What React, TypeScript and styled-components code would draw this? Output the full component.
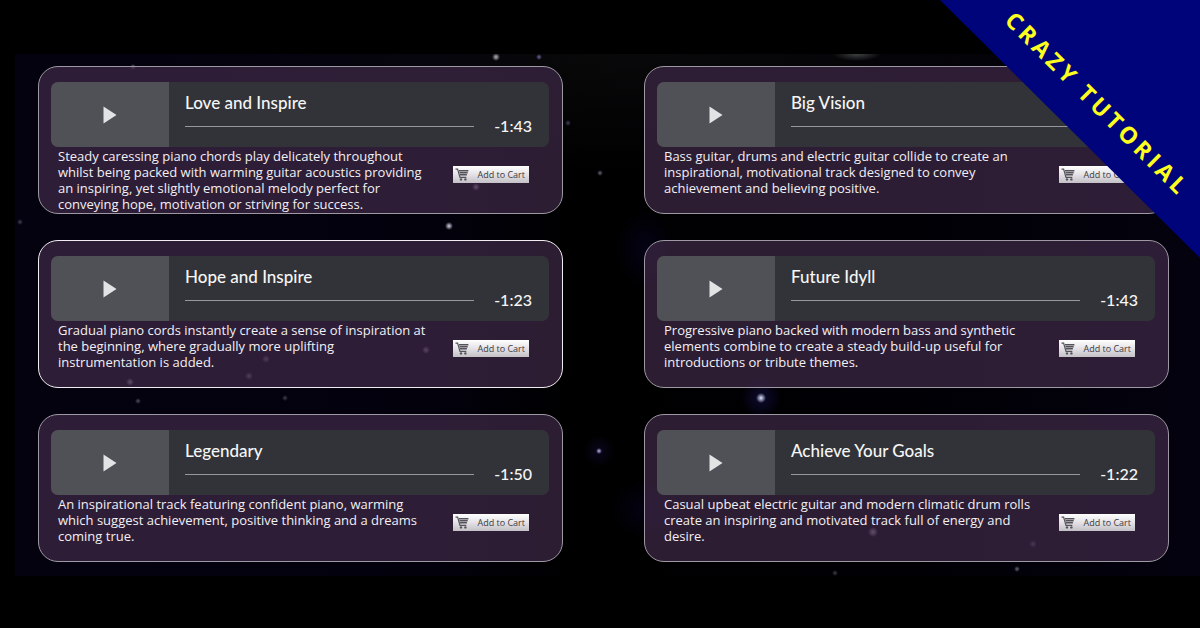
import React from "react";
import styled, { createGlobalStyle } from "styled-components";

type Track = {
  title: string;
  time: string;
  text: string;
  active?: boolean;
};

const tracks: Track[] = [
  {
    title: "Love and Inspire",
    time: "-1:43",
    text: "Steady caressing piano chords play delicately throughout whilst being packed with warming guitar acoustics providing an inspiring, yet slightly emotional melody perfect for conveying hope, motivation or striving for success.",
  },
  {
    title: "Big Vision",
    time: "-1:43",
    text: "Bass guitar, drums and electric guitar collide to create an inspirational, motivational track designed to convey achievement and believing positive.",
  },
  {
    title: "Hope and Inspire",
    time: "-1:23",
    text: "Gradual piano cords instantly create a sense of inspiration at the beginning, where gradually more uplifting instrumentation is added.",
    active: true,
  },
  {
    title: "Future Idyll",
    time: "-1:43",
    text: "Progressive piano backed with modern bass and synthetic elements combine to create a steady build-up useful for introductions or tribute themes.",
  },
  {
    title: "Legendary",
    time: "-1:50",
    text: "An inspirational track featuring confident piano, warming which suggest achievement, positive thinking and a dreams coming true.",
  },
  {
    title: "Achieve Your Goals",
    time: "-1:22",
    text: "Casual upbeat electric guitar and modern climatic drum rolls create an inspiring and motivated track full of energy and desire.",
  },
];

/* x, y, radius and colour of each star in the night sky */
const stars: [number, number, number, string][] = [
  [481, 3, 4, "rgba(225,225,235,.8)"],
  [524, 3, 3, "rgba(150,140,220,.7)"],
  [434, 172, 4, "rgba(235,235,255,.9)"],
  [585, 119, 3, "rgba(140,145,170,.7)"],
  [584, 397, 3, "rgba(205,195,255,.9)"],
  [746, 344, 5, "rgba(225,230,255,1)"],
  [461, 133, 4, "rgba(220,190,230,.9)"],
  [411, 296, 4, "rgba(210,180,230,.8)"],
  [115, 328, 4, "rgba(210,190,230,.9)"],
  [234, 322, 4, "rgba(190,160,220,.7)"],
  [251, 305, 4, "rgba(190,160,220,.7)"],
  [123, 347, 3, "rgba(110,110,140,.7)"],
  [270, 344, 3, "rgba(90,90,110,.7)"],
  [858, 478, 5, "rgba(230,200,230,.9)"],
  [1018, 490, 4, "rgba(160,130,190,.7)"],
  [1002, 515, 3, "rgba(150,145,170,.7)"],
  [820, 519, 3, "rgba(90,90,110,.7)"],
  [118, 13, 3, "rgba(170,160,190,.7)"],
  [5, 168, 3, "rgba(90,90,110,.7)"],
  [553, 69, 3, "rgba(90,90,130,.7)"],
];

const glows = [
  "radial-gradient(24px 7px at 842px 0, rgba(120,125,120,.5), transparent)",
  "radial-gradient(20px 20px at 746px 344px, rgba(24,20,90,.5), transparent)",
  "radial-gradient(16px 16px at 584px 397px, rgba(26,18,80,.35), transparent)",
  "radial-gradient(500px 120px at 620px 0, rgba(14,14,16,.6), transparent)",
  "radial-gradient(40px 30px at 635px 455px, rgba(8,4,40,.5), transparent)",
  "radial-gradient(30px 40px at 630px 195px, rgba(8,4,40,.5), transparent)",
  "linear-gradient(90deg, #04020f 0, #03010c 420px, #000 560px, #010005 900px, #04020e 100%)",
];

const skyImage = [
  ...stars.map(
    ([x, y, r, c]) =>
      `radial-gradient(circle ${r}px at ${x}px ${y}px, ${c}, transparent)`
  ),
  ...glows,
].join(", ");

const GlobalStyle = createGlobalStyle`
  * { box-sizing: border-box; }
  body {
    margin: 0;
    background: #000;
    color: #f2f0f4;
    font-family: "Open Sans", sans-serif;
  }
`;

const Page = styled.div`
  position: relative;
  min-height: 100vh;
  padding: 54px 0 52px 15px;
  overflow: hidden;
`;

const Sky = styled.main`
  display: grid;
  grid-template-columns: 1fr 1fr;
  gap: 26px 81px;
  padding: 12px 31px 14px 23px;
  background-image: ${skyImage};
`;

const Card = styled.article<{ $active?: boolean }>`
  min-height: 148px;
  padding: 15px 13px 0 12px;
  border: 1px solid ${(p) => (p.$active ? "#f0edf2" : "#9d98a2")};
  border-radius: 20px;
  background: rgba(62, 40, 70, 0.72);
`;

const Player = styled.div`
  display: flex;
  height: 65px;
  border-radius: 7px;
  overflow: hidden;
  background: #323338;
`;

const PlayButton = styled.button`
  display: flex;
  align-items: center;
  justify-content: center;
  flex: 0 0 118px;
  padding: 0;
  border: 0;
  background: #505156;
  cursor: pointer;
`;

const TrackPane = styled.div`
  flex: 1;
  min-width: 0;
  display: flex;
  flex-direction: column;
  gap: 3px;
  padding: 11px 17px 0 16px;
  font-family: Lato, sans-serif;
  font-weight: 500;
  color: #f6f6f6;
`;

const Title = styled.h2`
  margin: 0;
  font-size: 17px;
  font-weight: 500;
  line-height: 20px;
`;

const Timeline = styled.div`
  display: flex;
  align-items: center;
  gap: 20px;
  font-size: 16px;
  line-height: 20px;
`;

const Seek = styled.input`
  appearance: none;
  flex: 1;
  min-width: 0;
  height: 1px;
  margin: 0;
  background: #96979b;
  cursor: pointer;

  &::-webkit-slider-thumb {
    appearance: none;
    width: 0;
    height: 0;
  }
`;

const Info = styled.div`
  display: flex;
  align-items: flex-start;
  gap: 22px;
  padding: 1px 20px 0 7px;
`;

const Description = styled.p`
  flex: 1;
  margin: 0;
  font-size: 13px;
  font-weight: 500;
  line-height: 16px;
`;

const CartButton = styled.button`
  display: flex;
  align-items: center;
  justify-content: space-between;
  flex: 0 0 76px;
  height: 17px;
  margin-top: 18px;
  padding: 0 4px 0 2px;
  border: 0;
  background: linear-gradient(#ffffff, #e4e2e6 50%, #c3c1c6);
  color: #3c3a40;
  font-family: "Open Sans", sans-serif;
  font-size: 9px;
  font-weight: 500;
  line-height: 17px;
  white-space: nowrap;
  cursor: pointer;
`;

const Ribbon = styled.aside`
  position: absolute;
  top: 0;
  right: 0;
  display: grid;
  place-items: center;
  width: 260px;
  height: 258px;
  background: #00047a;
  clip-path: polygon(0 0, 100% 0, 100% 100%);
`;

const RibbonText = styled.span`
  padding: 0 0 76px 4px;
  transform: rotate(45deg);
  color: #ffff1e;
  font-size: 23px;
  font-weight: 700;
  line-height: 28px;
  letter-spacing: 4px;
  white-space: nowrap;
`;

const PlayIcon = () => (
  <svg width="14" height="18" viewBox="0 0 14 18" aria-hidden="true">
    <path d="M0.5 0.5 13.5 9 0.5 17.5z" fill="#e2e3e5" />
  </svg>
);

const CartIcon = () => (
  <svg width="14" height="13" viewBox="0 0 14 13" aria-hidden="true">
    <path
      d="M0.5 1.2H2.6L5 9.3H11.3"
      fill="none"
      stroke="#55535a"
      strokeWidth="1.2"
    />
    <path
      d="M4 2.8H13.4M4.5 4.8H12.7M5 6.8H11.9"
      fill="none"
      stroke="#55535a"
      strokeWidth="1.4"
    />
    <circle cx="6" cy="11.4" r="1.2" fill="#55535a" />
    <circle cx="10.4" cy="11.4" r="1.2" fill="#55535a" />
  </svg>
);

const TrackCard = ({ title, time, text, active }: Track) => (
  <Card $active={active}>
    <Player>
      <PlayButton type="button" aria-label={`Play ${title}`}>
        <PlayIcon />
      </PlayButton>
      <TrackPane>
        <Title>{title}</Title>
        <Timeline>
          <Seek type="range" defaultValue={0} aria-label={`Seek ${title}`} />
          <span>{time}</span>
        </Timeline>
      </TrackPane>
    </Player>
    <Info>
      <Description>{text}</Description>
      <CartButton type="button">
        <CartIcon />
        Add to Cart
      </CartButton>
    </Info>
  </Card>
);

export default function App() {
  return (
    <>
      <GlobalStyle />
      <Page>
        <Sky>
          {tracks.map((track) => (
            <TrackCard key={track.title} {...track} />
          ))}
        </Sky>
        <Ribbon>
          <RibbonText>CRAZY TUTORIAL</RibbonText>
        </Ribbon>
      </Page>
    </>
  );
}
